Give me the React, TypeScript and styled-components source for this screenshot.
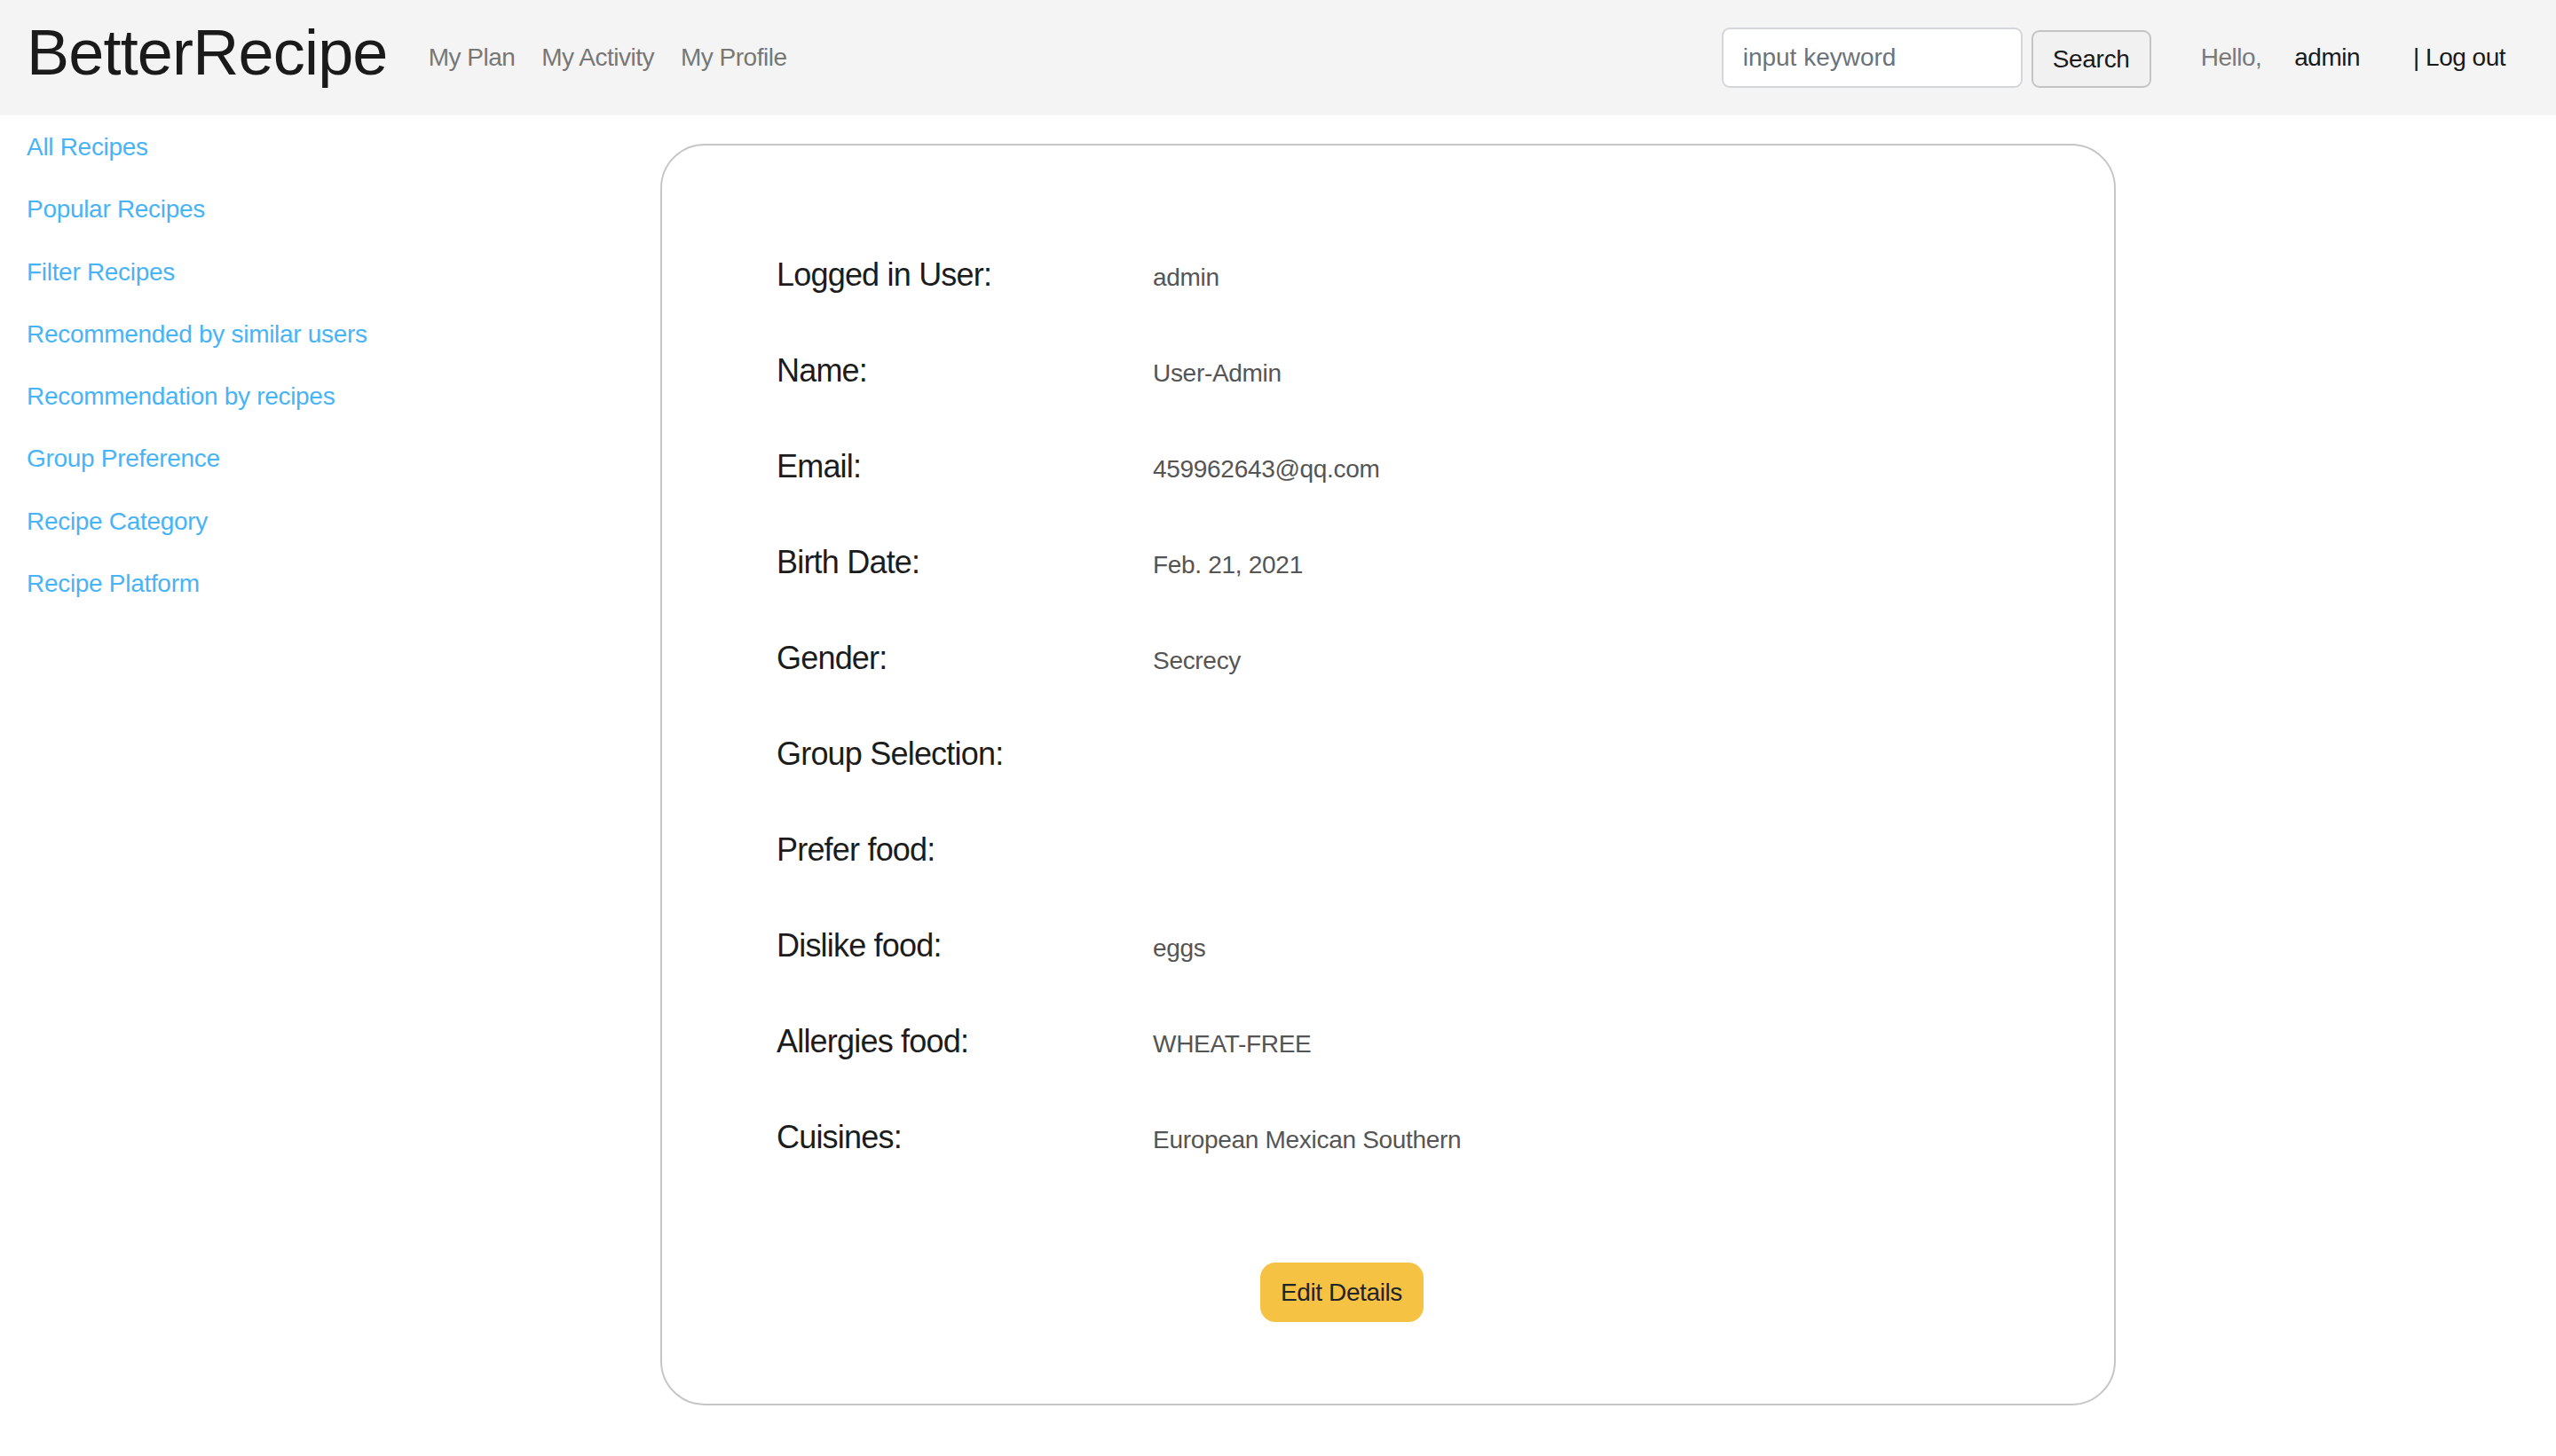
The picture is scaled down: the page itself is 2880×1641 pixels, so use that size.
import React from "react";
import styled, { createGlobalStyle } from "styled-components";

const GlobalStyle = createGlobalStyle`
  html, body {
    margin: 0;
    padding: 0;
    background: #ffffff;
    font-family: "Liberation Sans", Arial, Helvetica, sans-serif;
  }
  * { box-sizing: border-box; }
`;

const Header = styled.header`
  display: flex;
  align-items: center;
  height: 130px;
  padding: 0 57px 0 30px;
  background: #f4f4f4;
`;

const Logo = styled.a`
  font-size: 72px;
  letter-spacing: -0.8px;
  color: #1a1a1a;
  text-decoration: none;
  margin-bottom: 12px;
  margin-right: 46px;
`;

const NavLinks = styled.nav`
  display: flex;
  gap: 30px;
`;

const NavLink = styled.a`
  font-size: 28px;
  letter-spacing: -0.5px;
  color: #777777;
  text-decoration: none;
`;

const Spacer = styled.div`
  flex: 1;
`;

const SearchForm = styled.form`
  display: flex;
  align-items: center;
  gap: 10px;
  margin-right: 56px;
`;

const SearchInput = styled.input`
  width: 339px;
  height: 68px;
  padding: 0 22px;
  border: 2px solid #d3d6da;
  border-radius: 9px;
  background: #ffffff;
  font-family: "Liberation Sans", Arial, sans-serif;
  font-size: 28px;
  color: #333;
  &::placeholder {
    color: #6c737a;
  }
`;

const SearchButton = styled.button`
  width: 135px;
  height: 65px;
  margin-top: 3px;
  border: 2px solid #c4c4c4;
  border-radius: 9px;
  background: #f1f1f1;
  font-family: "Liberation Sans", Arial, sans-serif;
  font-size: 28px;
  letter-spacing: -0.3px;
  color: #1a1a1a;
`;

const UserText = styled.span<{ $muted?: boolean; $gap?: number }>`
  font-size: 28px;
  letter-spacing: -0.5px;
  color: ${(p) => (p.$muted ? "#7a7a7a" : "#1a1a1a")};
  margin-right: ${(p) => p.$gap ?? 0}px;
`;

const Body = styled.div`
  display: grid;
  grid-template-columns: 744px 1640px;
  align-items: start;
`;

const Sidebar = styled.aside`
  display: flex;
  flex-direction: column;
  gap: 30.3px;
  padding: 16px 0 0 30px;
`;

const SideLink = styled.a`
  display: block;
  font-size: 28px;
  line-height: 40px;
  letter-spacing: -0.3px;
  color: #48b4f5;
  text-decoration: none;
`;

const Card = styled.section`
  margin-top: 32px;
  border: 2px solid #c6c6c6;
  border-radius: 50px;
  padding: 124px 234px 92px 129px;
  display: flex;
  flex-direction: column;
`;

const Rows = styled.div`
  display: flex;
  flex-direction: column;
  gap: 64px;
`;

const Row = styled.div`
  display: grid;
  grid-template-columns: 424px 1fr;
  align-items: baseline;
  height: 44px;
`;

const Label = styled.span`
  font-size: 36px;
  line-height: 44px;
  letter-spacing: -0.8px;
  color: #1c1c1c;
`;

const Value = styled.span`
  font-size: 28px;
  line-height: 34px;
  letter-spacing: -0.3px;
  color: #555555;
`;

const Actions = styled.div`
  display: flex;
  justify-content: center;
  margin-top: 119px;
`;

const EditButton = styled.button`
  display: flex;
  align-items: center;
  justify-content: center;
  height: 67px;
  width: 184px;
  border: none;
  border-radius: 17px;
  background: #f6c244;
  font-family: "Liberation Sans", Arial, sans-serif;
  font-size: 28px;
  letter-spacing: -0.4px;
  color: #212529;
`;

const sideLinks = [
  "All Recipes",
  "Popular Recipes",
  "Filter Recipes",
  "Recommended by similar users",
  "Recommendation by recipes",
  "Group Preference",
  "Recipe Category",
  "Recipe Platform",
];

const profile: [string, string][] = [
  ["Logged in User:", "admin"],
  ["Name:", "User-Admin"],
  ["Email:", "459962643@qq.com"],
  ["Birth Date:", "Feb. 21, 2021"],
  ["Gender:", "Secrecy"],
  ["Group Selection:", ""],
  ["Prefer food:", ""],
  ["Dislike food:", "eggs"],
  ["Allergies food:", "WHEAT-FREE"],
  ["Cuisines:", "European Mexican Southern"],
];

export default function App() {
  return (
    <>
      <GlobalStyle />
      <Header>
        <Logo href="#">BetterRecipe</Logo>
        <NavLinks>
          <NavLink href="#">My Plan</NavLink>
          <NavLink href="#">My Activity</NavLink>
          <NavLink href="#">My Profile</NavLink>
        </NavLinks>
        <Spacer />
        <SearchForm onSubmit={(e) => e.preventDefault()}>
          <SearchInput placeholder="input keyword" />
          <SearchButton type="submit">Search</SearchButton>
        </SearchForm>
        <UserText $muted $gap={37}>Hello,</UserText>
        <UserText $gap={60}>admin</UserText>
        <UserText>| Log out</UserText>
      </Header>
      <Body>
        <Sidebar>
          {sideLinks.map((l) => (
            <SideLink key={l} href="#">
              {l}
            </SideLink>
          ))}
        </Sidebar>
        <Card>
          <Rows>
            {profile.map(([label, value]) => (
              <Row key={label}>
                <Label>{label}</Label>
                <Value>{value}</Value>
              </Row>
            ))}
          </Rows>
          <Actions>
            <EditButton>Edit Details</EditButton>
          </Actions>
        </Card>
      </Body>
    </>
  );
}
